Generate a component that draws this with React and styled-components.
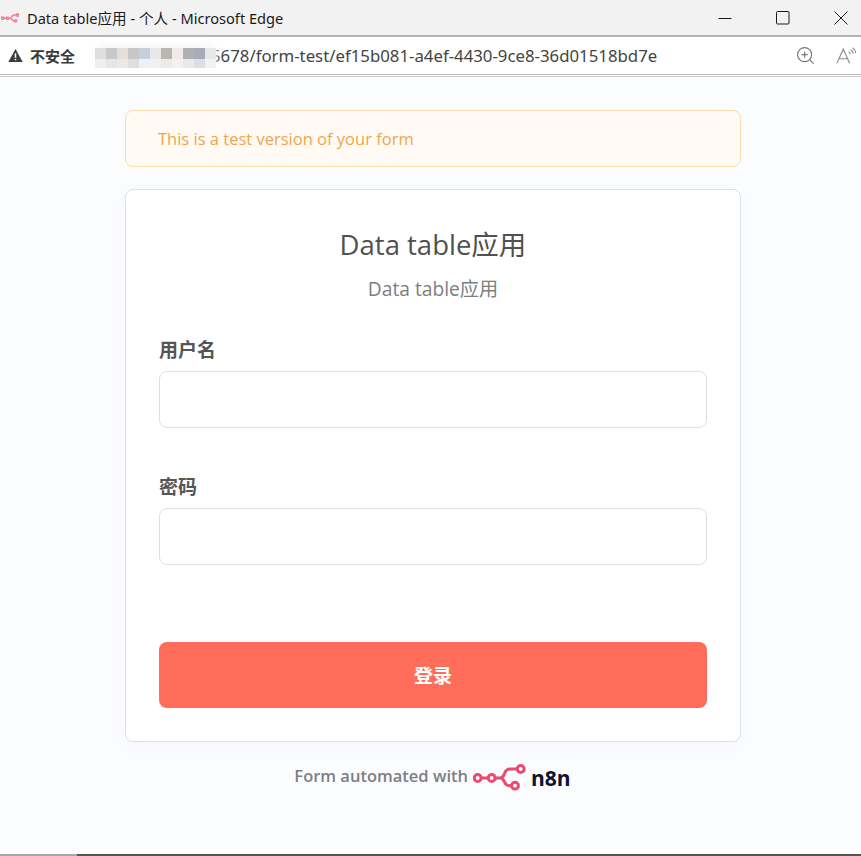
import React from "react";
import styled, { createGlobalStyle } from "styled-components";
import { ZoomIn } from "lucide-react";

const GlobalStyle = createGlobalStyle`
    html, body {
        margin: 0;
        padding: 0;
        height: 100%;
        background: #fbfcfe;
    }
    * {
        box-sizing: border-box;
    }
`;

const Wrapper = styled.div`
    width: 861px;
    height: 856px;
    display: flex;
    flex-direction: column;
    overflow: hidden;
    font-family: "Open Sans", "Noto Sans CJK SC", sans-serif;
`;

const TitleBar = styled.div`
    height: 37px;
    flex: none;
    display: flex;
    align-items: center;
    padding-left: 1px;
    padding-right: 13px;
    background: #f2f2f2;
    border-bottom: 2px solid #b4b4b4;
`;

const TabIcon = styled.svg`
    width: 18px;
    height: 10px;
    flex: none;
`;

const WindowTitle = styled.span`
    margin-left: 8px;
    font-family: "Noto Sans", "Noto Sans CJK SC", sans-serif;
    font-size: 14.6px;
    color: #1a1a1a;
    flex: 1;
`;

const WindowControls = styled.div`
    display: flex;
    align-items: center;
    gap: 44px;
    flex: none;
`;

const WindowIcon = styled.svg`
    width: 14px;
    height: 14px;
    display: block;
    fill: none;
    stroke: #1a1a1a;
    stroke-width: 1;
`;

const AddressBar = styled.div`
    height: 38px;
    flex: none;
    display: flex;
    align-items: center;
    background: #ffffff;
    border-bottom: 1px solid #b9b9b9;
    padding: 0 5px 0 8px;
`;

const SecurityLabel = styled.span`
    margin-left: 7px;
    width: 65px;
    font-family: "Noto Sans CJK SC", sans-serif;
    font-size: 15px;
    font-weight: 700;
    color: #3a3a3a;
    flex: none;
`;

// 地址栏里打码的部分, 盖住网址开头
const Mosaic = styled.div`
    position: relative;
    z-index: 1;
    width: 121px;
    height: 20px;
    margin-top: 4px;
    flex: none;
    display: grid;
    grid-template-columns: repeat(11, 11px);
    grid-template-rows: 11px 9px;
    background: #f7f7f7;
    box-shadow: 0 -4px 6px 1px #f9f9f9;
    border-radius: 6px;
`;

const MosaicCell = styled.div`
    background: ${(props) => props.$color};
`;

const UrlText = styled.span`
    margin-left: -5px;
    font-family: "Noto Sans", sans-serif;
    font-size: 16.8px;
    color: #444444;
    flex: 1;
`;

const BarIcons = styled.div`
    display: flex;
    align-items: center;
    gap: 20px;
    flex: none;
    color: #777777;
`;

const WhiteStrip = styled.div`
    height: 1px;
    flex: none;
    background: #ffffff;
`;

const Page = styled.div`
    flex: 1;
    display: flex;
    flex-direction: column;
    align-items: center;
    padding-top: 33px;
    padding-left: 5px;
    background: #fbfcfe;
    border-top: 1px solid #c9c9c9;
`;

const TestBanner = styled.div`
    width: 616px;
    height: 57px;
    display: flex;
    align-items: center;
    padding-left: 32px;
    background: #fffaf4;
    border: 1px solid #fcdcab;
    border-radius: 8px;
    font-size: 16.5px;
    color: #eea64e;
`;

const Card = styled.div`
    width: 616px;
    height: 553px;
    margin-top: 22px;
    padding: 33px;
    background: #ffffff;
    border: 1px solid #dbdfe7;
    border-radius: 8px;
    box-shadow: 0 4px 16px rgba(99, 77, 255, 0.03);
    display: flex;
    flex-direction: column;
`;

const FormTitle = styled.h1`
    margin: 0;
    font-size: 27.5px;
    font-weight: 400;
    line-height: 44px;
    text-align: center;
    color: #505050;
`;

const FormSubtitle = styled.p`
    margin: 8px 0 0;
    font-size: 19.2px;
    line-height: 28px;
    text-align: center;
    color: #7e7e7e;
`;

const Field = styled.div`
    margin-top: ${(props) => props.$top}px;
`;

const FieldLabel = styled.label`
    display: block;
    font-size: 19px;
    font-weight: 700;
    line-height: 24px;
    color: #555555;
`;

const TextInput = styled.input`
    display: block;
    width: 100%;
    height: 57px;
    margin-top: 9px;
    border: 1px solid #dbdfe7;
    border-radius: 8px;
    background: #ffffff;
    outline: none;
`;

const SubmitButton = styled.button`
    width: 100%;
    height: 66px;
    margin-top: 77px;
    border: none;
    border-radius: 8px;
    background: #ff6d5a;
    color: #ffffff;
    font-family: inherit;
    font-size: 19px;
    font-weight: 700;
`;

const Footer = styled.div`
    margin-top: 22px;
    height: 27px;
    padding-right: 1px;
    display: flex;
    align-items: center;
`;

const FooterText = styled.span`
    margin-right: 5px;
    margin-bottom: 5px;
    font-size: 16.5px;
    font-weight: 600;
    color: #7e7e86;
`;

const BrandName = styled.span`
    margin-left: 4px;
    margin-top: 1px;
    font-size: 21px;
    font-weight: 700;
    color: #101330;
`;

const BottomEdge = styled.div`
    height: 2px;
    flex: none;
    background: linear-gradient(to right, #a8a8ab 0, #a8a8ab 77px, #555555 77px);
`;

const mosaicColors = [
    "#e0dfdd", "#c9c9c9", "#e3e0dc", "#c6c6c6", "#c6d0dc", "#e8e8ea", "#bab6b0", "#f0ebe6", "#b0b0b4", "#a8acb6", "#e8e8ea",
    "#f0efec", "#e6e6e6", "#ebe8e5", "#dedede", "#edf1f7", "#f0f0f2", "#ebebe9", "#f5f0eb", "#e9e9eb", "#dcdee3", "#f2f2f4",
];

function N8nMark({ color, strokeWidth }) {
    return (
        <g fill="none" stroke={color} strokeWidth={strokeWidth}>
            <circle cx="4.7" cy="14" r="3.4" />
            <circle cx="18.7" cy="14" r="3.4" />
            <circle cx="47.7" cy="5" r="3.4" />
            <circle cx="42" cy="21.7" r="3.4" />
            <path d="M8.1 14H15.3M22.1 14H27C30 14 30.5 12 31.5 9.5C32.5 6.5 34 5 37 5H44.3M27 14C30 14 30.5 16 31.5 18C32.5 20.5 34 21.7 37 21.7H38.6" />
        </g>
    );
}

function App() {
    return (
        <Wrapper>
            <GlobalStyle />
            <TitleBar>
                <TabIcon viewBox="0 0 52 27">
                    <N8nMark color="#f27e99" strokeWidth={4.5} />
                </TabIcon>
                <WindowTitle>Data table应用 - 个人 - Microsoft Edge</WindowTitle>
                <WindowControls>
                    <WindowIcon viewBox="0 0 14 14">
                        <path d="M0.5 7.5H13.5" />
                    </WindowIcon>
                    <WindowIcon viewBox="0 0 14 14">
                        <rect x="0.5" y="0.5" width="12.5" height="12.5" rx="1" />
                    </WindowIcon>
                    <WindowIcon viewBox="0 0 14 14">
                        <path d="M0.5 0.5L13.5 13.5M13.5 0.5L0.5 13.5" />
                    </WindowIcon>
                </WindowControls>
            </TitleBar>
            <AddressBar>
                <svg width="15" height="15" viewBox="0 0 16 15">
                    <path d="M8 0.5L15.7 14.5H0.3Z" fill="#3d3d3d" />
                    <path d="M7.2 5H8.8V10H7.2ZM7.2 11H8.8V12.6H7.2Z" fill="#ffffff" />
                </svg>
                <SecurityLabel>不安全</SecurityLabel>
                <Mosaic>
                    {mosaicColors.map((color, index) => (
                        <MosaicCell key={index} $color={color} />
                    ))}
                </Mosaic>
                <UrlText>5678/form-test/ef15b081-a4ef-4430-9ce8-36d01518bd7e</UrlText>
                <BarIcons>
                    <ZoomIn size={21} strokeWidth={1.3} />
                    <svg width="20" height="20" viewBox="0 0 22 20" fill="none" stroke="#8a8a8a" strokeWidth="1.2">
                        <path d="M1 18L8 2.5L15 18M3.6 13H12.4" />
                        <path d="M14 5.5C15.2 6 15.6 7 15.6 8M16 3C18 3.8 18.8 5.6 18.8 7.5M18 1C20.5 2.2 21.5 4.5 21.5 7" />
                    </svg>
                </BarIcons>
            </AddressBar>
            <WhiteStrip />
            <Page>
                <TestBanner>This is a test version of your form</TestBanner>
                <Card>
                    <FormTitle>Data table应用</FormTitle>
                    <FormSubtitle>Data table应用</FormSubtitle>
                    <Field $top={35}>
                        <FieldLabel>用户名</FieldLabel>
                        <TextInput type="text" />
                    </Field>
                    <Field $top={47}>
                        <FieldLabel>密码</FieldLabel>
                        <TextInput type="password" />
                    </Field>
                    <SubmitButton>登录</SubmitButton>
                </Card>
                <Footer>
                    <FooterText>Form automated with</FooterText>
                    <svg width="54" height="27" viewBox="0 0 54 27">
                        <N8nMark color="#ea4b71" strokeWidth={3} />
                    </svg>
                    <BrandName>n8n</BrandName>
                </Footer>
            </Page>
            <BottomEdge />
        </Wrapper>
    );
}

export default App;
